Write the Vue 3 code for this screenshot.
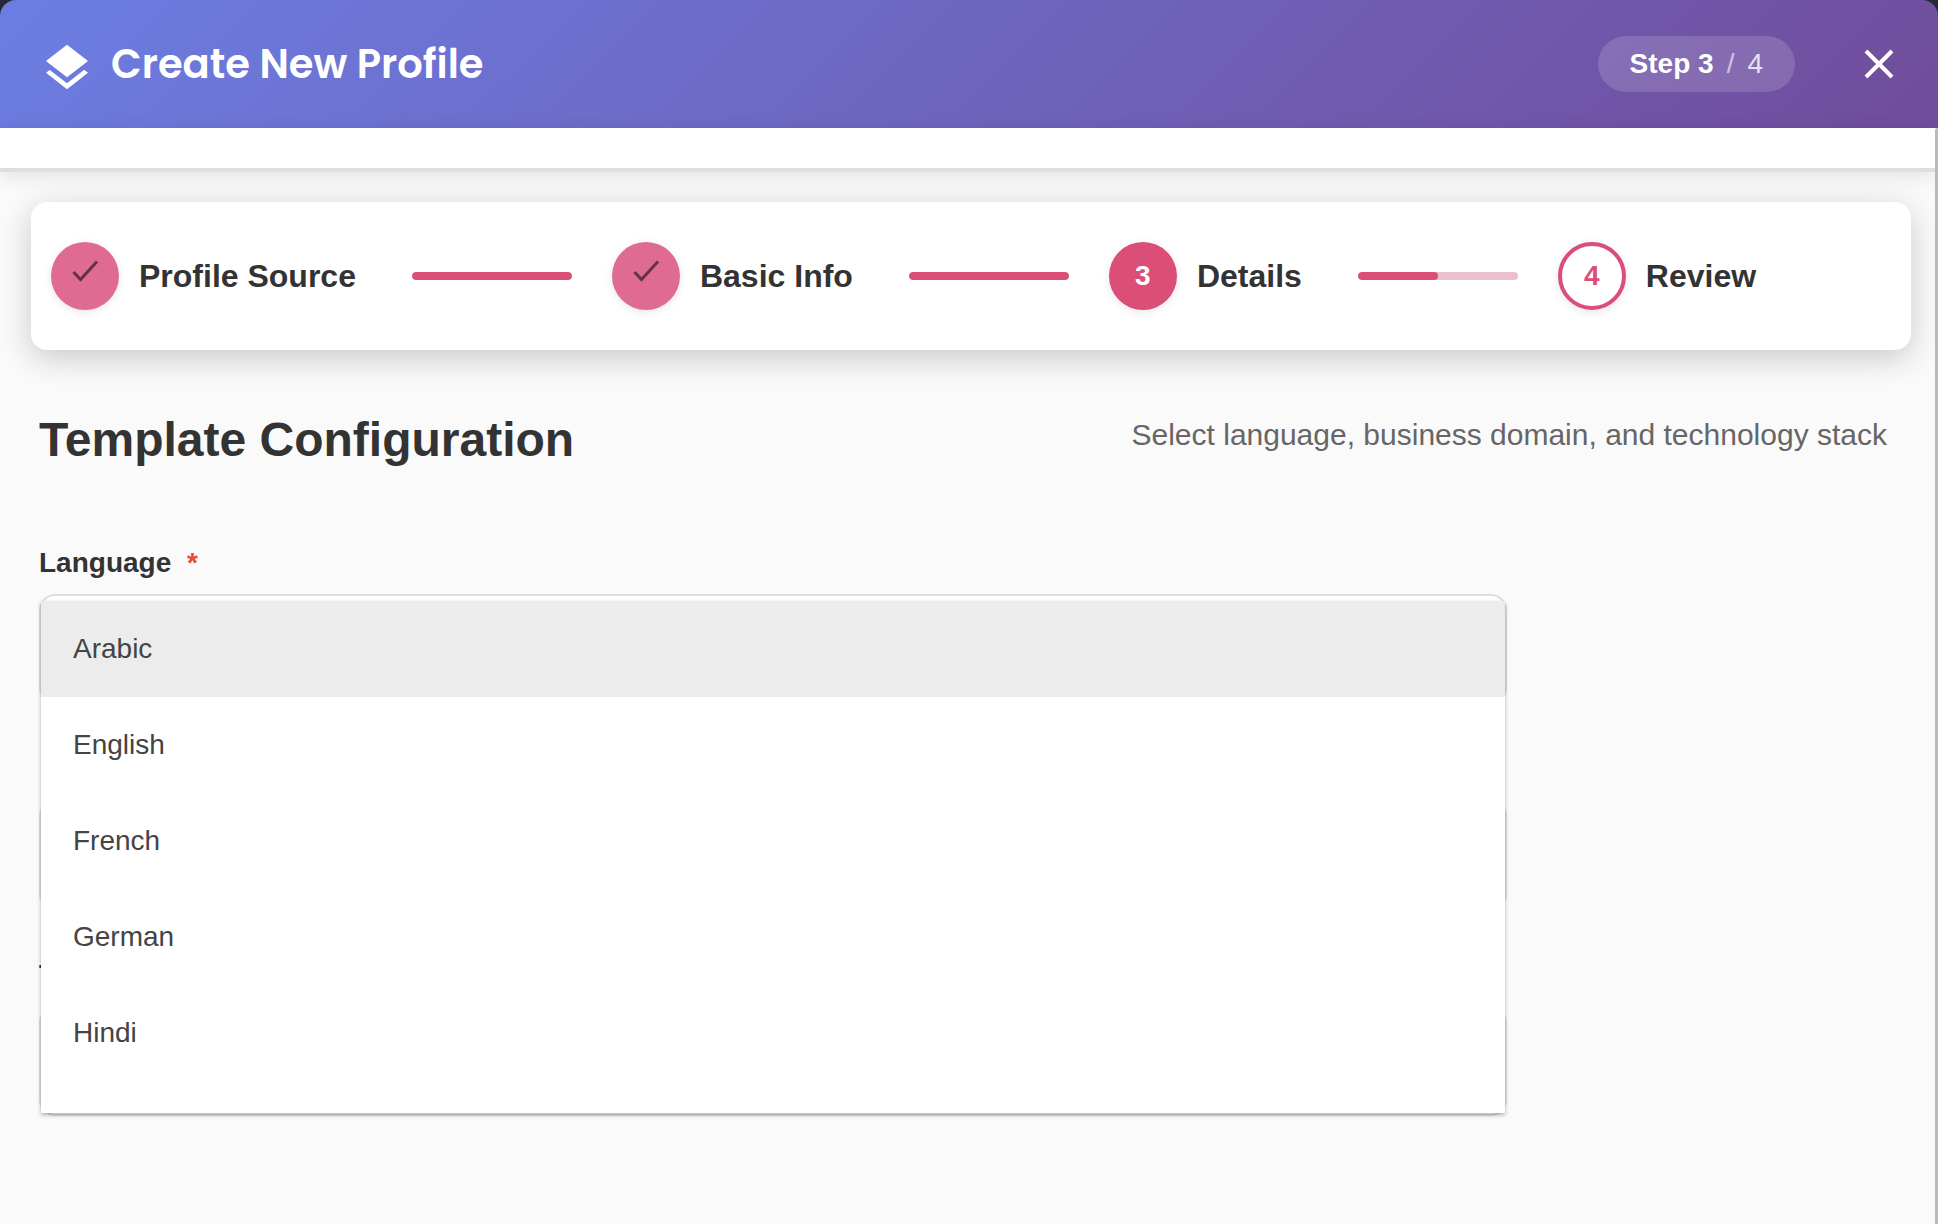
<script setup>
import { ref } from 'vue'

const steps = [
  { number: 1, label: 'Profile Source', state: 'done', progress: 100 },
  { number: 2, label: 'Basic Info', state: 'done', progress: 100 },
  { number: 3, label: 'Details', state: 'active', progress: 50 },
  { number: 4, label: 'Review', state: 'upcoming', progress: null }
]

const languages = ['Arabic', 'English', 'French', 'German', 'Hindi']
const highlighted = ref('Arabic')
</script>

<template>
  <div class="dialog" role="dialog" aria-labelledby="dialog-title">
    <header class="header">
      <svg class="logo" viewBox="0 0 24 24" aria-hidden="true">
        <path d="M11.99 18.54l-7.37-5.73L3 14.07l9 7 9-7-1.63-1.27-7.38 5.74zM12 16l7.36-5.73L21 9l-9-7-9 7 1.63 1.27L12 16z" />
      </svg>
      <h1 id="dialog-title" class="title">Create New Profile</h1>
      <div class="counter">
        <strong>Step 3</strong>
        <span class="slash">/</span>
        <span class="total">4</span>
      </div>
      <button class="close" type="button" aria-label="Close">
        <svg viewBox="0 0 56 56" aria-hidden="true">
          <path d="M15 15l26 26M41 15L15 41" />
        </svg>
      </button>
    </header>

    <div class="body">
      <main class="content">
        <div class="strip"></div>

        <ol class="stepper">
          <li v-for="step in steps" :key="step.number" class="step">
            <span class="badge" :class="step.state">
              <svg v-if="step.state === 'done'" viewBox="0 0 68 68" aria-label="Completed">
                <path d="M22.5 30L29.5 37.5L46 19.5" />
              </svg>
              <template v-else>{{ step.number }}</template>
            </span>
            <span class="step-label">{{ step.label }}</span>
            <span v-if="step.progress !== null" class="track">
              <span class="fill" :style="{ width: step.progress + '%' }"></span>
            </span>
          </li>
        </ol>

        <div class="section-head">
          <h2>Template Configuration</h2>
          <p>Select language, business domain, and technology stack</p>
        </div>

        <form class="form">
          <div class="field">
            <label for="language">Language <span class="required">*</span></label>
            <div class="anchor">
              <select id="language" class="control"></select>
              <div class="menu" role="listbox" aria-label="Language">
                <button
                  v-for="language in languages"
                  :key="language"
                  type="button"
                  role="option"
                  class="option"
                  :class="{ highlighted: language === highlighted }"
                  :aria-selected="language === highlighted"
                  @mouseenter="highlighted = language"
                >{{ language }}</button>
              </div>
            </div>
          </div>
          <div class="field">
            <label for="domain"></label>
            <select id="domain" class="control" aria-label="Business domain"></select>
          </div>
          <div class="field">
            <label for="stack">Technology Stack</label>
            <select id="stack" class="control"></select>
          </div>
        </form>
      </main>
      <div class="scrollbar" aria-hidden="true"></div>
    </div>
  </div>
</template>

<style>
body {
  margin: 0;
  background: #242a38;
}
</style>

<style scoped>
.dialog {
  display: flex;
  flex-direction: column;
  min-height: 100vh;
  color: #333;
  font-family: "Liberation Sans", Arial, sans-serif;
  font-size: 28px;
}

.header {
  display: flex;
  align-items: center;
  height: 128px;
  box-sizing: border-box;
  padding: 0 31px 0 39px;
  border-radius: 16px 16px 0 0;
  background: linear-gradient(135deg, #6b7ee2 0%, #714c9b 100%);
  color: #fff;
}

.logo {
  width: 56px;
  height: 56px;
  margin-top: 8px;
  fill: #fff;
}

.title {
  flex: 1;
  margin: 0 0 0 16px;
  font-family: Poppins, Inter, sans-serif;
  font-size: 40px;
  font-weight: 600;
  line-height: 60px;
}

.counter {
  display: flex;
  align-items: center;
  gap: 13px;
  height: 56px;
  padding: 0 32px;
  border-radius: 28px;
  background: rgba(255, 255, 255, 0.15);
}

.slash {
  opacity: 0.6;
}

.total {
  opacity: 0.8;
}

.close {
  width: 56px;
  height: 56px;
  margin-left: 56px;
  padding: 0;
  border: 0;
  background: none;
  cursor: pointer;
}

.close svg {
  display: block;
  width: 56px;
  height: 56px;
  fill: none;
  stroke: #fff;
  stroke-width: 4;
}

.body {
  display: flex;
  flex: 1;
  background: #fafafa;
}

.content {
  flex: 1;
  min-width: 0;
}

.scrollbar {
  width: 3px;
  border-radius: 3px 0 0 0;
  background: #b9b9b9;
}

.strip {
  height: 40px;
  border-bottom: 4px solid #dedede;
  background: #fff;
  box-shadow: 0 4px 20px rgba(0, 0, 0, 0.1);
}

.stepper {
  display: flex;
  margin: 30px 24px 0 31px;
  padding: 40px 20px;
  border-radius: 16px;
  background: #fff;
  box-shadow: 0 8px 32px rgba(0, 0, 0, 0.2);
  list-style: none;
}

.step {
  display: flex;
  align-items: center;
}

.badge {
  display: flex;
  align-items: center;
  justify-content: center;
  width: 68px;
  height: 68px;
  box-sizing: border-box;
  border-radius: 50%;
  box-shadow: 0 2px 8px rgba(0, 0, 0, 0.1);
  font-weight: 700;
}

.badge.done {
  background: #e06b92;
}

.badge.active {
  background: #da4e78;
  color: #fff;
}

.badge.upcoming {
  border: 4px solid #da4e78;
  background: #fff;
  color: #da4e78;
}

.badge svg {
  width: 68px;
  height: 68px;
  fill: none;
  stroke: #643246;
  stroke-width: 3;
}

.step-label {
  margin-left: 20px;
  font-size: 32px;
  font-weight: 700;
  line-height: 40px;
}

.track {
  width: 160px;
  height: 8px;
  margin: 0 40px 0 56px;
  border-radius: 4px;
  background: #eabfd0;
  overflow: hidden;
}

.fill {
  display: block;
  height: 8px;
  border-radius: 4px;
  background: #da4e78;
}

.section-head {
  display: flex;
  justify-content: space-between;
  padding: 60px 48px 0 39px;
}

.section-head h2 {
  margin: 0;
  font-size: 48px;
  font-weight: 700;
  line-height: 60px;
}

.section-head p {
  margin: 0;
  color: #666;
  font-size: 30px;
  line-height: 50px;
}

.form {
  display: grid;
  gap: 48px;
  margin: 76px 428px 0 39px;
}

.field {
  display: flex;
  flex-direction: column;
}

.field label {
  min-height: 34px;
  margin-bottom: 14px;
  font-weight: 700;
  line-height: 34px;
}

.required {
  margin-left: 8px;
  color: #e74c3c;
}

.anchor {
  position: relative;
  display: flex;
}

.control {
  width: 100%;
  height: 110px;
  border: 2px solid #dedede;
  border-radius: 16px;
  background: #fff;
  appearance: none;
}

.menu {
  position: absolute;
  z-index: 1;
  top: 7px;
  right: 2px;
  left: 2px;
  height: 512px;
  background: #fff;
  box-shadow: 0 2px 4px rgba(0, 0, 0, 0.3);
}

.option {
  display: block;
  width: 100%;
  height: 96px;
  padding: 0 32px;
  border: 0;
  background: #fff;
  color: #444;
  font: inherit;
  text-align: left;
}

.option.highlighted {
  background: #ececec;
}
</style>
